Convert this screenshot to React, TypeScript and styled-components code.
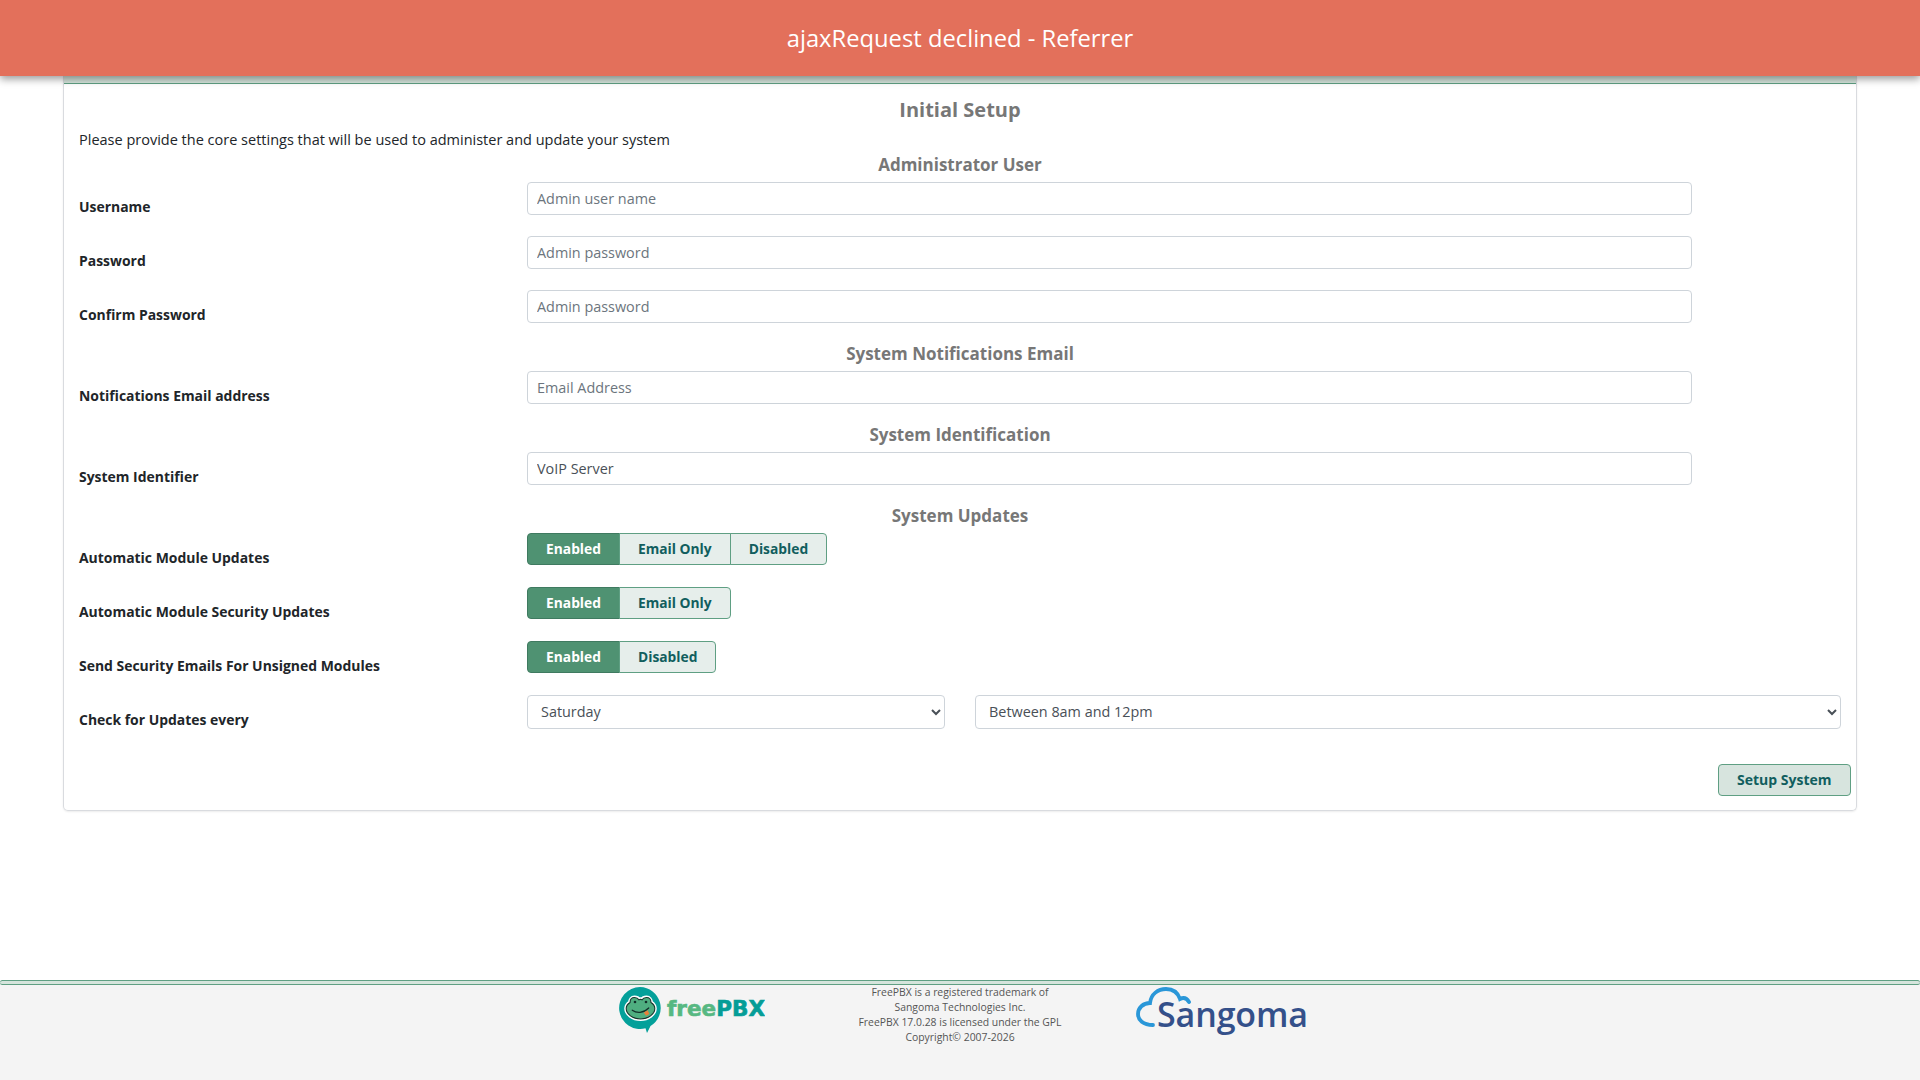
import React from 'react';
import styled, { createGlobalStyle } from 'styled-components';

const GlobalStyle = createGlobalStyle`
  html,
  body {
    margin: 0;
    padding: 0;
    background-color: #fff;
  }

  body {
    font-family: 'Open Sans', 'Liberation Sans', sans-serif;
    font-size: 14.4px;
    color: #212529;
  }

  * {
    box-sizing: border-box;
  }
`;

const FROG_HEAD =
  'M15 11.5c-2.5 0-4 2-4 4.5-2.500 1.500-3.500 3.500-3.500 5.500 0 5 6 9.500 13 9.500s13-4.500 13-9.500c0-2-1-4-3.500-5.500 0-2.500-1.500-4.500-4-4.500-2 0-3.500 1-4 2-1-.5-2-.5-3 0-.5-1-2-2-4-2z';

const FreePbxLogo = () => (
  <svg width="146" height="46" viewBox="0 0 146 46" aria-label="freePBX">
    <path d="M21 0a21 21 0 1 0 5.500 41.300L28 46l3.500-7A21 21 0 0 0 21 0z" fill="#04a09a" />
    <g transform="translate(21.5 21) scale(1.1) translate(-20.5 -21)">
      <path d={FROG_HEAD} fill="#fff" stroke="#fff" strokeWidth="3.600" strokeLinejoin="round" />
      <path d={FROG_HEAD} fill="#4fae80" stroke="#17352c" strokeWidth="1" />
      <circle cx="15.500" cy="15.500" r="1.200" fill="#12302a" />
      <circle cx="25.500" cy="15.500" r="1.200" fill="#12302a" />
      <path d="M13 23c4 3 10 3 15-2" fill="none" stroke="#12302a" strokeWidth="1.100" strokeLinecap="round" />
      <path d="M23.500 25l3.500-2 1.500 3.500-3 1.500z" fill="#e8803a" />
    </g>
    <LogoWord x="48" y="29" textLength="98" lengthAdjust="spacingAndGlyphs">
      <tspan fill="#57b882" stroke="#57b882">
        free
      </tspan>
      <tspan fill="#059d97" stroke="#059d97">
        PBX
      </tspan>
    </LogoWord>
  </svg>
);

const SangomaLogo = () => (
  <svg width="174" height="58" viewBox="0 0 174 58" aria-label="Sangoma">
    <path
      d="M17 38C7 38 2 33 2 27c0-6 5-11 12-11C15 7 22 2 30 2c7 0 12 4 14 10 4-2 7-.5 9 3"
      fill="none"
      stroke="#2a97d8"
      strokeWidth="3.800"
      strokeLinecap="round"
    />
    <SangomaWord x="21" y="40" textLength="151">
      Sangoma
    </SangomaWord>
  </svg>
);

const App = () => {
  return (
    <Page>
      <GlobalStyle />
      <Header>ajaxRequest declined - Referrer</Header>

      <Main>
        <Card>
          <CardStrip />
          <CardBody>
            <Title>Initial Setup</Title>
            <Intro>
              Please provide the core settings that will be used to administer and update your system
            </Intro>

            <SectionTitle>Administrator User</SectionTitle>
            <Row>
              <Label>Username</Label>
              <TextInput type="text" placeholder="Admin user name" />
            </Row>
            <Row>
              <Label>Password</Label>
              <TextInput type="password" placeholder="Admin password" />
            </Row>
            <Row>
              <Label>Confirm Password</Label>
              <TextInput type="password" placeholder="Admin password" />
            </Row>

            <SectionTitle>System Notifications Email</SectionTitle>
            <Row>
              <Label>Notifications Email address</Label>
              <TextInput type="text" placeholder="Email Address" />
            </Row>

            <SectionTitle>System Identification</SectionTitle>
            <Row>
              <Label>System Identifier</Label>
              <TextInput type="text" defaultValue="VoIP Server" />
            </Row>

            <SectionTitle>System Updates</SectionTitle>
            <Row>
              <Label>Automatic Module Updates</Label>
              <ToggleGroup>
                <ToggleButton $active>Enabled</ToggleButton>
                <ToggleButton>Email Only</ToggleButton>
                <ToggleButton>Disabled</ToggleButton>
              </ToggleGroup>
            </Row>
            <Row>
              <Label>Automatic Module Security Updates</Label>
              <ToggleGroup>
                <ToggleButton $active>Enabled</ToggleButton>
                <ToggleButton>Email Only</ToggleButton>
              </ToggleGroup>
            </Row>
            <Row>
              <Label>Send Security Emails For Unsigned Modules</Label>
              <ToggleGroup>
                <ToggleButton $active>Enabled</ToggleButton>
                <ToggleButton>Disabled</ToggleButton>
              </ToggleGroup>
            </Row>
            <ScheduleRow>
              <Label>Check for Updates every</Label>
              <DaySelect defaultValue="Saturday">
                <option>Saturday</option>
              </DaySelect>
              <TimeSelect defaultValue="Between 8am and 12pm">
                <option>Between 8am and 12pm</option>
              </TimeSelect>
            </ScheduleRow>

            <Actions>
              <SubmitButton>Setup System</SubmitButton>
            </Actions>
          </CardBody>
        </Card>
      </Main>

      <Footer>
        <FooterStrip />
        <FooterContent>
          <FreePbxSlot>
            <FreePbxLogo />
          </FreePbxSlot>
          <FooterText>
            FreePBX is a registered trademark of
            <br />
            Sangoma Technologies Inc.
            <br />
            FreePBX 17.0.28 is licensed under the GPL
            <br />
            Copyright© 2007-2026
          </FooterText>
          <SangomaSlot>
            <SangomaLogo />
          </SangomaSlot>
        </FooterContent>
      </Footer>
    </Page>
  );
};

export default App;

const Page = styled.div`
  min-height: 100vh;
  display: flex;
  flex-direction: column;
`;

const Header = styled.header`
  position: relative;
  z-index: 2;
  height: 76px;
  display: flex;
  align-items: center;
  justify-content: center;
  background-color: #e3705b;
  box-shadow: 0 3px 8px rgba(0, 0, 0, 0.4);
  font-size: 23.75px;
  color: #fff;
`;

const Main = styled.main`
  flex: 1;
  padding: 0 63px;
`;

const Card = styled.section`
  border: 1px solid #d9dbdf;
  border-top: none;
  border-radius: 0 0 5px 5px;
  box-shadow: 0 1px 2px rgba(0, 0, 0, 0.08);
`;

const CardStrip = styled.div`
  height: 8px;
  background-color: #d5e4dc;
  border-bottom: 1.5px solid #5f9f83;
`;

const CardBody = styled.div`
  padding: 12px 15px 14px;
`;

const Title = styled.h1`
  margin: 0 0 7px;
  font-size: 20px;
  line-height: 27px;
  font-weight: 700;
  text-align: center;
  color: #777;
`;

const Intro = styled.p`
  margin: 0 0 5px;
  font-size: 14.5px;
  line-height: 20px;
  color: #212529;
`;

const SectionTitle = styled.h2`
  margin: 0 0 8px;
  padding-top: 1px;
  font-size: 17px;
  line-height: 18px;
  font-weight: 700;
  text-align: center;
  color: #777;
`;

const Row = styled.div`
  display: grid;
  grid-template-columns: 448px 1165px;
  align-items: start;
  min-height: 35px;
  margin-bottom: 19px;
`;

const ScheduleRow = styled(Row)`
  grid-template-columns: 448px 418px 866px;
`;

const Label = styled.label`
  padding-top: 15px;
  font-size: 13.95px;
  line-height: 20px;
  font-weight: 700;
  color: #212529;
`;

const TextInput = styled.input`
  width: 100%;
  height: 33px;
  padding: 0 9px;
  border: 1px solid #ced4da;
  border-radius: 4px;
  background-color: #fff;
  font-family: inherit;
  font-size: 14.4px;
  color: #495057;

  &::placeholder {
    color: #6c757d;
    opacity: 1;
  }
`;

const DaySelect = styled.select`
  height: 34px;
  padding: 0 9px 2px;
  border: 1px solid #ced4da;
  border-radius: 4px;
  background-color: #fff;
  font-family: inherit;
  font-size: 14.4px;
  color: #495057;
`;

const TimeSelect = styled(DaySelect)`
  margin-left: 30px;
  width: 866px;
`;

const ToggleGroup = styled.div`
  display: flex;
  height: 32px;
`;

const ToggleButton = styled.button<{ $active?: boolean }>`
  height: 32px;
  padding: 0 18px 2px;
  margin-left: -1px;
  border: 1px solid ${(p) => (p.$active ? '#3f7a60' : '#5f9f83')};
  background-color: ${(p) => (p.$active ? '#4f9272' : '#e6eeeb')};
  font-family: inherit;
  font-size: 13.8px;
  font-weight: 700;
  color: ${(p) => (p.$active ? '#fff' : '#115e5e')};

  &:first-child {
    margin-left: 0;
    border-radius: 4px 0 0 4px;
  }

  &:last-child {
    border-radius: 0 4px 4px 0;
  }
`;

const Actions = styled.div`
  display: flex;
  justify-content: flex-end;
  margin: 34px -10px 0 0;
`;

const SubmitButton = styled.button`
  height: 32px;
  padding: 0 18.5px 2px;
  border: 1px solid #5f9f83;
  border-radius: 4px;
  background-color: #d7e4de;
  font-family: inherit;
  font-size: 14px;
  font-weight: 700;
  color: #115e5e;
`;

const Footer = styled.footer`
  height: 100px;
  background-color: #f4f4f4;
`;

const FooterStrip = styled.div`
  height: 5px;
  background-color: #d5e4dc;
  border-top: 1px solid #5f9f83;
  border-bottom: 1px solid #5f9f83;
  border-radius: 3px;
`;

const FooterContent = styled.div`
  display: grid;
  grid-template-columns: 1fr 352px 1fr;
`;

const FreePbxSlot = styled.div`
  display: flex;
  justify-content: flex-end;
  padding: 2px 19px 0 0;
`;

const SangomaSlot = styled.div`
  padding-top: 2px;
`;

const FooterText = styled.div`
  font-size: 10.4px;
  line-height: 15px;
  text-align: center;
  color: #555;
`;

const LogoWord = styled.text`
  font-family: 'DejaVu Sans', sans-serif;
  font-size: 20.5px;
  font-weight: 700;
  stroke-width: 0.6px;
`;

const SangomaWord = styled.text`
  font-family: 'Open Sans', sans-serif;
  font-size: 34px;
  font-weight: 600;
  fill: #34508a;
`;
